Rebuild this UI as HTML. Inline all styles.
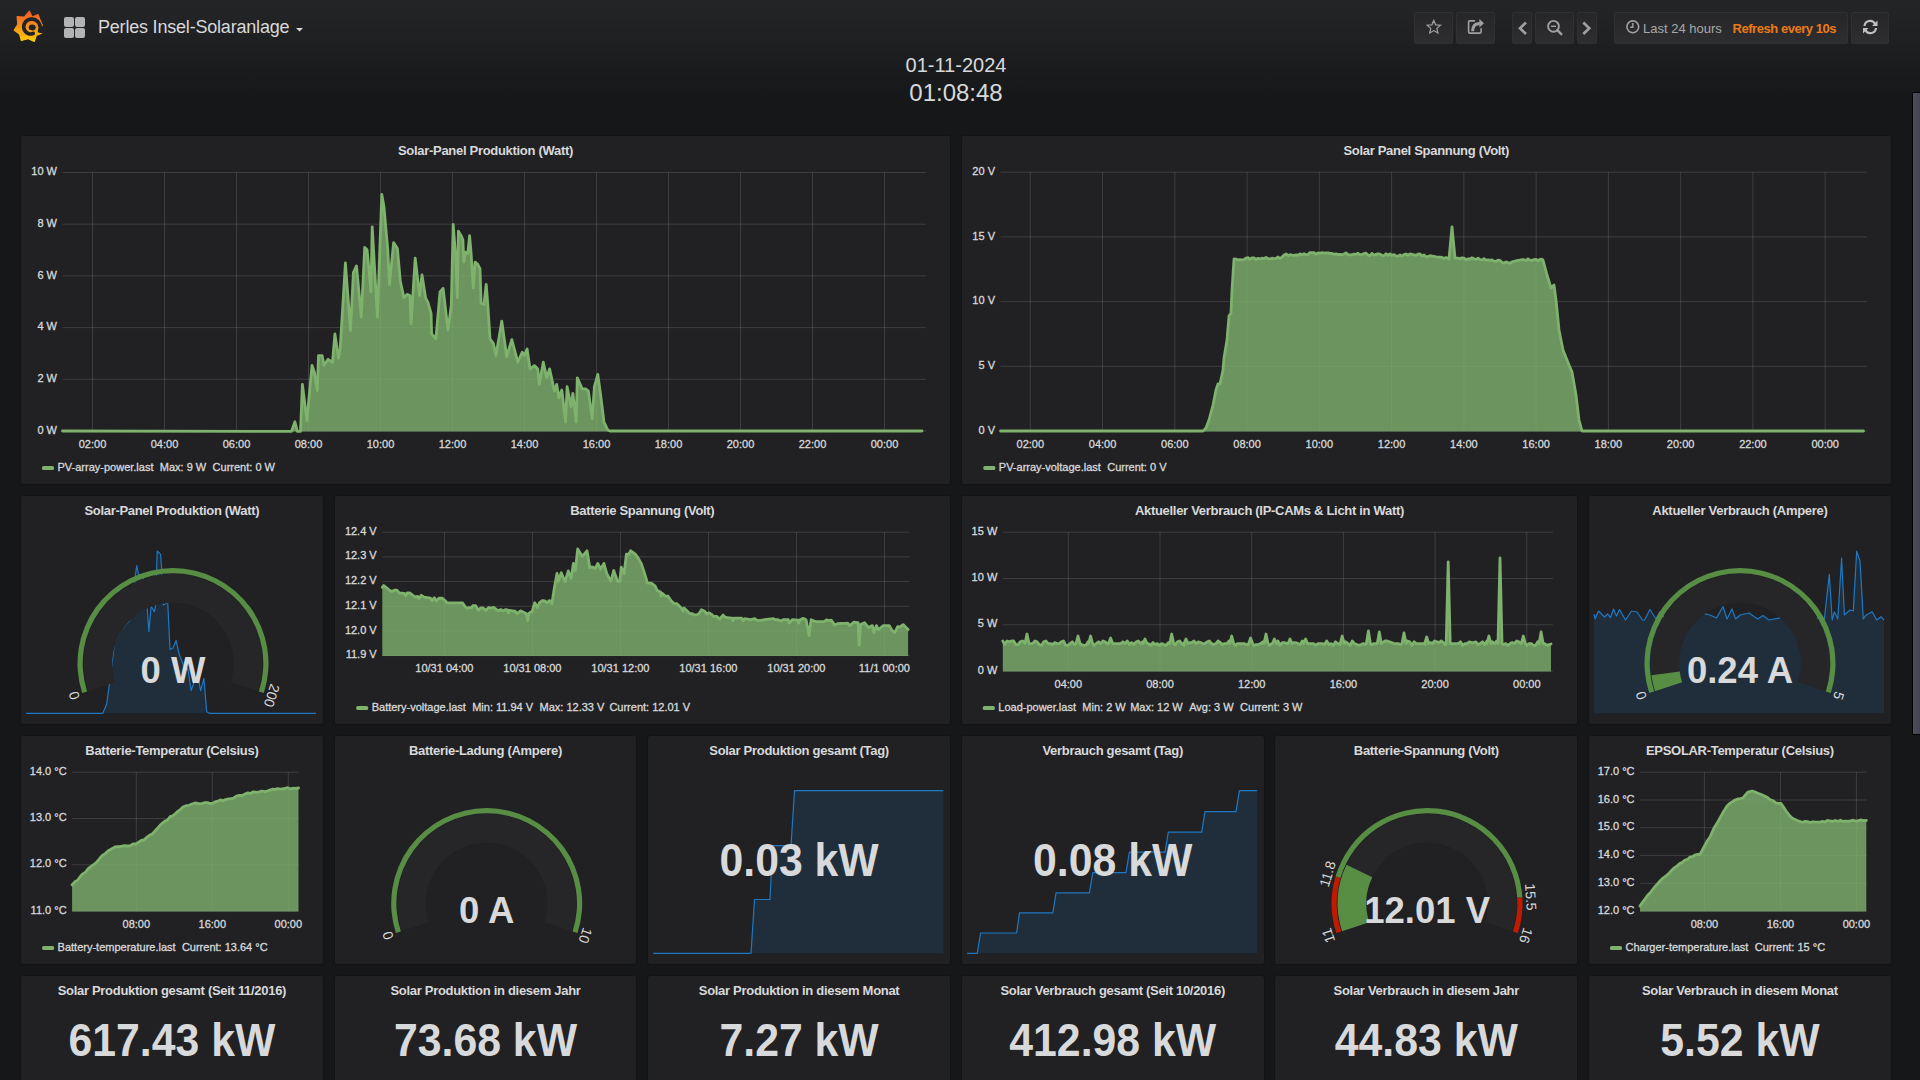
<!DOCTYPE html>
<html><head><meta charset="utf-8"><style>
html,body{margin:0;padding:0;width:1920px;height:1080px;overflow:hidden;}
body{background:linear-gradient(180deg,#222426 10px,#161719 100px);font-family:"Liberation Sans", sans-serif;color:#d8d9da;position:relative;}
.p{position:absolute;background:#212124;border:1px solid #131315;box-sizing:border-box;border-radius:3px;}
.nb{position:absolute;top:12px;height:32px;box-sizing:border-box;border:1px solid #303033;border-radius:2px;background:linear-gradient(180deg,#262628,#2e2e31);}
svg{position:absolute;left:0;top:0;}
svg text{font-family:"Liberation Sans", sans-serif;}
</style></head><body>
<div class="nb" style="left:1414px;width:39px"></div><div class="nb" style="left:1456px;width:39px"></div><div class="nb" style="left:1512px;width:20px"></div><div class="nb" style="left:1535px;width:39px"></div><div class="nb" style="left:1577px;width:20px"></div><div class="nb" style="left:1614px;width:234px"></div><div class="nb" style="left:1851px;width:38px"></div><div style="position:absolute;left:1912px;top:92px;width:8px;height:643px;background:linear-gradient(90deg,#4d4d5d,#44444f);border:1px solid #000;border-right:none;box-sizing:border-box"></div><div class="p" style="left:20px;top:135px;width:931px;height:350.2px"></div><div class="p" style="left:960.8px;top:135px;width:931px;height:350.2px"></div><div class="p" style="left:20px;top:495px;width:303.8px;height:230.1px"></div><div class="p" style="left:333.6px;top:495px;width:617.4px;height:230.1px"></div><div class="p" style="left:960.8px;top:495px;width:617.4px;height:230.1px"></div><div class="p" style="left:1588px;top:495px;width:303.8px;height:230.1px"></div><div class="p" style="left:20px;top:735px;width:303.8px;height:230.1px"></div><div class="p" style="left:20px;top:975px;width:303.8px;height:230.1px"></div><div class="p" style="left:333.6px;top:735px;width:303.8px;height:230.1px"></div><div class="p" style="left:333.6px;top:975px;width:303.8px;height:230.1px"></div><div class="p" style="left:647.2px;top:735px;width:303.8px;height:230.1px"></div><div class="p" style="left:647.2px;top:975px;width:303.8px;height:230.1px"></div><div class="p" style="left:960.8px;top:735px;width:303.8px;height:230.1px"></div><div class="p" style="left:960.8px;top:975px;width:303.8px;height:230.1px"></div><div class="p" style="left:1274.4px;top:735px;width:303.8px;height:230.1px"></div><div class="p" style="left:1274.4px;top:975px;width:303.8px;height:230.1px"></div><div class="p" style="left:1588px;top:735px;width:303.8px;height:230.1px"></div><div class="p" style="left:1588px;top:975px;width:303.8px;height:230.1px"></div>
<svg width="1920" height="1080" viewBox="0 0 1920 1080">
<defs><linearGradient id="lg" x1="0" y1="0" x2="0" y2="1"><stop offset="0" stop-color="#f05a28"/><stop offset="1" stop-color="#fbca0a"/></linearGradient></defs>
<path d="M29.35,11.3 L32.22,17.15 L38,14.7 L40.1,20.4 L42.2,25.2 L39.42,28.81 L41.8,33.2 L36.23,35.33 L34.2,41.3 L27.85,38.48 L21.4,40.2 L19.55,33.9 L14.3,30.1 L17.97,24.32 L17.2,16.6 L24.47,17.27 Z" fill="url(#lg)" stroke="url(#lg)" stroke-width="1.4" stroke-linejoin="round"/>
<path d="M44.5,32 L39.6,31.04 L39.97,29.85 L40.17,28.62 L40.2,27.39 L40.06,26.18 L39.76,25.01 L39.31,23.89 L38.71,22.86 L37.99,21.92 L37.15,21.1 L36.21,20.4 L35.2,19.85 L34.12,19.44 L33.02,19.18 L31.89,19.07 L30.77,19.12 L29.68,19.32 L28.63,19.67 L27.65,20.15 L26.75,20.75 L25.95,21.47 L25.26,22.28 L24.69,23.17 L24.25,24.12 L23.94,25.11 L23.78,26.12 L23.76,27.14 L23.87,28.15 L24.12,29.12 L24.49,30.04 L24.99,30.89 L25.58,31.66 L26.27,32.33 L27.04,32.9 L27.87,33.35 L28.75,33.68 L29.65,33.89 L30.57,33.97 L31.48,33.93 L32.36,33.76 L33.21,33.48" fill="none" stroke="#212225" stroke-width="3.7" stroke-linecap="round" stroke-linejoin="round"/>
<ellipse cx="32.2" cy="27.5" rx="3.5" ry="3.0" fill="#212225"/>
<circle cx="30.8" cy="31.2" r="1.1" fill="#f3a11b"/>
<rect x="64" y="17" width="10" height="10" rx="2" fill="#b2b3b4"/>
<rect x="75" y="17" width="10" height="10" rx="2" fill="#b2b3b4"/>
<rect x="64" y="28" width="10" height="10" rx="2" fill="#b2b3b4"/>
<rect x="75" y="28" width="10" height="10" rx="2" fill="#b2b3b4"/>
<text x="98" y="33" font-size="18" font-weight="400" text-anchor="start" fill="#d8d9da" letter-spacing="-0.2">Perles Insel-Solaranlage</text>
<path d="M296,28 L303,28 L299.5,31.5 Z" fill="#d8d9da"/>
<path d="M1433.8,20.4 L1435.68,24.81 L1440.46,25.24 L1436.84,28.39 L1437.91,33.06 L1433.8,30.6 L1429.69,33.06 L1430.76,28.39 L1427.14,25.24 L1431.92,24.81 Z" fill="none" stroke="#a0a0a0" stroke-width="1.2" stroke-linejoin="miter"/>
<path d="M1475,20.9 L1469.6,20.9 Q1468.6,20.9 1468.6,21.9 L1468.6,32.1 Q1468.6,33.1 1469.6,33.1 L1480.1,33.1 Q1481.1,33.1 1481.1,32.1 L1481.1,28.3" fill="none" stroke="#a0a0a0" stroke-width="1.6"/>
<path d="M1472.6,31.2 C1472.6,25.6 1475.2,23.4 1479.8,23.4" fill="none" stroke="#a0a0a0" stroke-width="3"/>
<path d="M1479.4,19 L1484,23.3 L1479.4,27.6 Z" fill="#a0a0a0"/>
<path d="M1526,22.5 L1520,28.3 L1526,34" fill="none" stroke="#a0a0a0" stroke-width="2.6"/>
<path d="M1583.3,22.5 L1589.3,28.3 L1583.3,34" fill="none" stroke="#a0a0a0" stroke-width="2.6"/>
<circle cx="1553.5" cy="26.3" r="5.4" fill="none" stroke="#a0a0a0" stroke-width="1.9"/>
<path d="M1557.3,30.2 L1561.3,34.2" stroke="#a0a0a0" stroke-width="2.4" stroke-linecap="round"/>
<path d="M1551,26.3 L1556,26.3" stroke="#a0a0a0" stroke-width="1.5"/>
<circle cx="1632.8" cy="26.8" r="5.9" fill="none" stroke="#a0a0a0" stroke-width="1.6"/>
<path d="M1632.8,23 L1632.8,27.2 L1630.2,27.2" fill="none" stroke="#a0a0a0" stroke-width="1.4"/>
<text x="1643" y="33.2" font-size="13" font-weight="400" text-anchor="start" fill="#a9a9a9" >Last 24 hours</text>
<text x="1732.5" y="33.2" font-size="13" font-weight="700" text-anchor="start" fill="#eb7b18" letter-spacing="-0.45">Refresh every 10s</text>
<path d="M1864.5,26 A5.6,5.6 0 0 1 1875,23.8" fill="none" stroke="#c0c0c0" stroke-width="2.2"/>
<path d="M1877.5,20.5 L1877.5,26 L1872,26 Z" fill="#c0c0c0"/>
<path d="M1876,28 A5.6,5.6 0 0 1 1865.5,30.2" fill="none" stroke="#c0c0c0" stroke-width="2.2"/>
<path d="M1863,33.5 L1863,28 L1868.5,28 Z" fill="#c0c0c0"/>
<text x="956" y="71.5" font-size="20" font-weight="400" text-anchor="middle" fill="#d8d9da" >01-11-2024</text>
<text x="956" y="100.8" font-size="24" font-weight="400" text-anchor="middle" fill="#d8d9da" >01:08:48</text>
<text x="485.5" y="154.6" font-size="13" font-weight="700" text-anchor="middle" fill="#d8d9da" letter-spacing="-0.3">Solar-Panel Produktion (Watt)</text>
<text x="1426.3" y="154.6" font-size="13" font-weight="700" text-anchor="middle" fill="#d8d9da" letter-spacing="-0.3">Solar Panel Spannung (Volt)</text>
<g stroke="rgba(255,255,255,0.13)" stroke-width="1"><line x1="62.5" y1="431" x2="926" y2="431" /><line x1="62.5" y1="379.3" x2="926" y2="379.3" /><line x1="62.5" y1="327.6" x2="926" y2="327.6" /><line x1="62.5" y1="275.9" x2="926" y2="275.9" /><line x1="62.5" y1="224.2" x2="926" y2="224.2" /><line x1="62.5" y1="172.5" x2="926" y2="172.5" /><line x1="92.5" y1="172.5" x2="92.5" y2="431" /><line x1="164.5" y1="172.5" x2="164.5" y2="431" /><line x1="236.5" y1="172.5" x2="236.5" y2="431" /><line x1="308.5" y1="172.5" x2="308.5" y2="431" /><line x1="380.5" y1="172.5" x2="380.5" y2="431" /><line x1="452.5" y1="172.5" x2="452.5" y2="431" /><line x1="524.5" y1="172.5" x2="524.5" y2="431" /><line x1="596.5" y1="172.5" x2="596.5" y2="431" /><line x1="668.5" y1="172.5" x2="668.5" y2="431" /><line x1="740.5" y1="172.5" x2="740.5" y2="431" /><line x1="812.5" y1="172.5" x2="812.5" y2="431" /><line x1="884.5" y1="172.5" x2="884.5" y2="431" /></g>
<text x="57" y="433.6" font-size="11" font-weight="400" text-anchor="end" fill="#d8d9da"  stroke="#d8d9da" stroke-width="0.3">0 W</text>
<text x="57" y="381.9" font-size="11" font-weight="400" text-anchor="end" fill="#d8d9da"  stroke="#d8d9da" stroke-width="0.3">2 W</text>
<text x="57" y="330.2" font-size="11" font-weight="400" text-anchor="end" fill="#d8d9da"  stroke="#d8d9da" stroke-width="0.3">4 W</text>
<text x="57" y="278.5" font-size="11" font-weight="400" text-anchor="end" fill="#d8d9da"  stroke="#d8d9da" stroke-width="0.3">6 W</text>
<text x="57" y="226.8" font-size="11" font-weight="400" text-anchor="end" fill="#d8d9da"  stroke="#d8d9da" stroke-width="0.3">8 W</text>
<text x="57" y="175.1" font-size="11" font-weight="400" text-anchor="end" fill="#d8d9da"  stroke="#d8d9da" stroke-width="0.3">10 W</text>
<text x="92.5" y="447.8" font-size="11" font-weight="400" text-anchor="middle" fill="#d8d9da"  stroke="#d8d9da" stroke-width="0.3">02:00</text>
<text x="164.5" y="447.8" font-size="11" font-weight="400" text-anchor="middle" fill="#d8d9da"  stroke="#d8d9da" stroke-width="0.3">04:00</text>
<text x="236.5" y="447.8" font-size="11" font-weight="400" text-anchor="middle" fill="#d8d9da"  stroke="#d8d9da" stroke-width="0.3">06:00</text>
<text x="308.5" y="447.8" font-size="11" font-weight="400" text-anchor="middle" fill="#d8d9da"  stroke="#d8d9da" stroke-width="0.3">08:00</text>
<text x="380.5" y="447.8" font-size="11" font-weight="400" text-anchor="middle" fill="#d8d9da"  stroke="#d8d9da" stroke-width="0.3">10:00</text>
<text x="452.5" y="447.8" font-size="11" font-weight="400" text-anchor="middle" fill="#d8d9da"  stroke="#d8d9da" stroke-width="0.3">12:00</text>
<text x="524.5" y="447.8" font-size="11" font-weight="400" text-anchor="middle" fill="#d8d9da"  stroke="#d8d9da" stroke-width="0.3">14:00</text>
<text x="596.5" y="447.8" font-size="11" font-weight="400" text-anchor="middle" fill="#d8d9da"  stroke="#d8d9da" stroke-width="0.3">16:00</text>
<text x="668.5" y="447.8" font-size="11" font-weight="400" text-anchor="middle" fill="#d8d9da"  stroke="#d8d9da" stroke-width="0.3">18:00</text>
<text x="740.5" y="447.8" font-size="11" font-weight="400" text-anchor="middle" fill="#d8d9da"  stroke="#d8d9da" stroke-width="0.3">20:00</text>
<text x="812.5" y="447.8" font-size="11" font-weight="400" text-anchor="middle" fill="#d8d9da"  stroke="#d8d9da" stroke-width="0.3">22:00</text>
<text x="884.5" y="447.8" font-size="11" font-weight="400" text-anchor="middle" fill="#d8d9da"  stroke="#d8d9da" stroke-width="0.3">00:00</text>
<path d="M62.5,431 L291.5,431.4 L294.9,421.8 L297.3,431.4 L300.5,431.4 L302.4,384.5 L306.9,420.6 L312,365.3 L314.4,372.5 L317.3,390.5 L318.5,355.6 L322.1,355.6 L324,365.3 L328.1,359.3 L332.5,362.4 L334.9,334 L338.5,358.1 L340.2,348.4 L345.4,263 L350.5,330.4 L353.4,272.6 L356.5,265.9 L361.3,317.2 L364.7,247.4 L367.1,249.8 L371,291.9 L372.2,226.9 L377.4,317.2 L381.8,194.4 L383.9,206.5 L387.8,249.8 L389.5,284.7 L393.6,242.6 L397.4,248.6 L400.3,281.1 L403.9,297.9 L407,294.3 L409.9,295.5 L411.1,323.9 L415.2,258.2 L419.6,295.5 L422,275 L425.6,297.9 L428,302.7 L431.1,313.5 L431.6,334 L435.9,338.8 L440,291.9 L443.1,288.3 L448,330.4 L451.3,305.1 L453.2,224.5 L455.6,255.6 L457.3,297.8 L458.4,231.1 L461.1,235.6 L462.9,240 L463.8,262.2 L465.6,252.2 L467.8,253.3 L469.6,235.6 L471.1,253.3 L473.3,287.8 L475.1,262.2 L477.8,264.4 L480,268.9 L481.1,303.3 L484,304.4 L486.2,284.4 L487.8,304.4 L490,338.9 L493.3,343.3 L496,355.6 L501.8,321.1 L506.7,356.7 L511.8,339.6 L517.8,362.2 L522.2,352.2 L524.4,355.6 L527.1,348.9 L530,368.9 L534.4,365.6 L537.8,368.9 L539.3,384.4 L543.3,362.2 L546.7,377.8 L549.6,368.9 L554.4,391.1 L556.7,384.4 L558.9,397.8 L561.8,390 L565.6,422.2 L567.1,386.7 L571.1,406.7 L572.9,393.3 L576.2,422.2 L577.3,377.8 L582.2,388.9 L585.6,388.9 L588.4,391.1 L592.2,418.9 L594.4,386.7 L597.8,374.4 L600.4,393.3 L604,422.2 L607.8,430 L610,431 L922,431 L922,431.5 L62.5,431.5 Z" fill="rgba(126,178,109,0.8)" stroke="none"/>
<path d="M62.5,431 L291.5,431.4 L294.9,421.8 L297.3,431.4 L300.5,431.4 L302.4,384.5 L306.9,420.6 L312,365.3 L314.4,372.5 L317.3,390.5 L318.5,355.6 L322.1,355.6 L324,365.3 L328.1,359.3 L332.5,362.4 L334.9,334 L338.5,358.1 L340.2,348.4 L345.4,263 L350.5,330.4 L353.4,272.6 L356.5,265.9 L361.3,317.2 L364.7,247.4 L367.1,249.8 L371,291.9 L372.2,226.9 L377.4,317.2 L381.8,194.4 L383.9,206.5 L387.8,249.8 L389.5,284.7 L393.6,242.6 L397.4,248.6 L400.3,281.1 L403.9,297.9 L407,294.3 L409.9,295.5 L411.1,323.9 L415.2,258.2 L419.6,295.5 L422,275 L425.6,297.9 L428,302.7 L431.1,313.5 L431.6,334 L435.9,338.8 L440,291.9 L443.1,288.3 L448,330.4 L451.3,305.1 L453.2,224.5 L455.6,255.6 L457.3,297.8 L458.4,231.1 L461.1,235.6 L462.9,240 L463.8,262.2 L465.6,252.2 L467.8,253.3 L469.6,235.6 L471.1,253.3 L473.3,287.8 L475.1,262.2 L477.8,264.4 L480,268.9 L481.1,303.3 L484,304.4 L486.2,284.4 L487.8,304.4 L490,338.9 L493.3,343.3 L496,355.6 L501.8,321.1 L506.7,356.7 L511.8,339.6 L517.8,362.2 L522.2,352.2 L524.4,355.6 L527.1,348.9 L530,368.9 L534.4,365.6 L537.8,368.9 L539.3,384.4 L543.3,362.2 L546.7,377.8 L549.6,368.9 L554.4,391.1 L556.7,384.4 L558.9,397.8 L561.8,390 L565.6,422.2 L567.1,386.7 L571.1,406.7 L572.9,393.3 L576.2,422.2 L577.3,377.8 L582.2,388.9 L585.6,388.9 L588.4,391.1 L592.2,418.9 L594.4,386.7 L597.8,374.4 L600.4,393.3 L604,422.2 L607.8,430 L610,431 L922,431" fill="none" stroke="#7eb26d" stroke-width="2.8" stroke-linejoin="round" stroke-linecap="round"/>
<rect x="42" y="465.9" width="12" height="4.2" rx="1.5" fill="#7eb26d"/>
<text x="57.5" y="471" font-size="11" font-weight="400" text-anchor="start" fill="#d8d9da"  stroke="#d8d9da" stroke-width="0.3">PV-array-power.last</text>
<text x="159.8" y="471" font-size="11" font-weight="400" text-anchor="start" fill="#d8d9da"  stroke="#d8d9da" stroke-width="0.3">Max: 9 W</text>
<text x="212.6" y="471" font-size="11" font-weight="400" text-anchor="start" fill="#d8d9da"  stroke="#d8d9da" stroke-width="0.3">Current: 0 W</text>
<g stroke="rgba(255,255,255,0.13)" stroke-width="1"><line x1="1000.5" y1="431" x2="1867" y2="431" /><line x1="1000.5" y1="366.3" x2="1867" y2="366.3" /><line x1="1000.5" y1="301.6" x2="1867" y2="301.6" /><line x1="1000.5" y1="236.9" x2="1867" y2="236.9" /><line x1="1000.5" y1="172.2" x2="1867" y2="172.2" /><line x1="1030.3" y1="172.3" x2="1030.3" y2="431" /><line x1="1102.56" y1="172.3" x2="1102.56" y2="431" /><line x1="1174.82" y1="172.3" x2="1174.82" y2="431" /><line x1="1247.08" y1="172.3" x2="1247.08" y2="431" /><line x1="1319.34" y1="172.3" x2="1319.34" y2="431" /><line x1="1391.6" y1="172.3" x2="1391.6" y2="431" /><line x1="1463.86" y1="172.3" x2="1463.86" y2="431" /><line x1="1536.12" y1="172.3" x2="1536.12" y2="431" /><line x1="1608.38" y1="172.3" x2="1608.38" y2="431" /><line x1="1680.64" y1="172.3" x2="1680.64" y2="431" /><line x1="1752.9" y1="172.3" x2="1752.9" y2="431" /><line x1="1825.16" y1="172.3" x2="1825.16" y2="431" /></g>
<text x="995" y="433.6" font-size="11" font-weight="400" text-anchor="end" fill="#d8d9da"  stroke="#d8d9da" stroke-width="0.3">0 V</text>
<text x="995" y="368.9" font-size="11" font-weight="400" text-anchor="end" fill="#d8d9da"  stroke="#d8d9da" stroke-width="0.3">5 V</text>
<text x="995" y="304.2" font-size="11" font-weight="400" text-anchor="end" fill="#d8d9da"  stroke="#d8d9da" stroke-width="0.3">10 V</text>
<text x="995" y="239.5" font-size="11" font-weight="400" text-anchor="end" fill="#d8d9da"  stroke="#d8d9da" stroke-width="0.3">15 V</text>
<text x="995" y="174.8" font-size="11" font-weight="400" text-anchor="end" fill="#d8d9da"  stroke="#d8d9da" stroke-width="0.3">20 V</text>
<text x="1030.3" y="447.8" font-size="11" font-weight="400" text-anchor="middle" fill="#d8d9da"  stroke="#d8d9da" stroke-width="0.3">02:00</text>
<text x="1102.56" y="447.8" font-size="11" font-weight="400" text-anchor="middle" fill="#d8d9da"  stroke="#d8d9da" stroke-width="0.3">04:00</text>
<text x="1174.82" y="447.8" font-size="11" font-weight="400" text-anchor="middle" fill="#d8d9da"  stroke="#d8d9da" stroke-width="0.3">06:00</text>
<text x="1247.08" y="447.8" font-size="11" font-weight="400" text-anchor="middle" fill="#d8d9da"  stroke="#d8d9da" stroke-width="0.3">08:00</text>
<text x="1319.34" y="447.8" font-size="11" font-weight="400" text-anchor="middle" fill="#d8d9da"  stroke="#d8d9da" stroke-width="0.3">10:00</text>
<text x="1391.6" y="447.8" font-size="11" font-weight="400" text-anchor="middle" fill="#d8d9da"  stroke="#d8d9da" stroke-width="0.3">12:00</text>
<text x="1463.86" y="447.8" font-size="11" font-weight="400" text-anchor="middle" fill="#d8d9da"  stroke="#d8d9da" stroke-width="0.3">14:00</text>
<text x="1536.12" y="447.8" font-size="11" font-weight="400" text-anchor="middle" fill="#d8d9da"  stroke="#d8d9da" stroke-width="0.3">16:00</text>
<text x="1608.38" y="447.8" font-size="11" font-weight="400" text-anchor="middle" fill="#d8d9da"  stroke="#d8d9da" stroke-width="0.3">18:00</text>
<text x="1680.64" y="447.8" font-size="11" font-weight="400" text-anchor="middle" fill="#d8d9da"  stroke="#d8d9da" stroke-width="0.3">20:00</text>
<text x="1752.9" y="447.8" font-size="11" font-weight="400" text-anchor="middle" fill="#d8d9da"  stroke="#d8d9da" stroke-width="0.3">22:00</text>
<text x="1825.16" y="447.8" font-size="11" font-weight="400" text-anchor="middle" fill="#d8d9da"  stroke="#d8d9da" stroke-width="0.3">00:00</text>
<path d="M1000.5,431 L1203,431 L1206,428 L1209,420 L1213,405 L1216,390 L1218,384 L1220,384 L1223,370 L1224,358 L1227,340 L1229,316 L1231,313 L1232,290 L1234,259 L1236,259.04 L1238,259.94 L1240,259.69 L1242,259.95 L1244,259.7 L1246,258.06 L1248,257.63 L1250,259.31 L1252,257.89 L1254,257.8 L1256,259.59 L1258,258.3 L1260,259.14 L1262,258.24 L1264,258.6 L1266,257.39 L1268,258.52 L1270,259.05 L1272,258.19 L1274,258.68 L1276,258.48 L1278,256.99 L1280,258.62 L1282,257.02 L1284,255.12 L1286,253.82 L1288,255.71 L1290,254.65 L1292,255.13 L1294,255.39 L1296,254.89 L1298,255.27 L1300,253.89 L1302,254.75 L1304,253.78 L1306,254.85 L1308,254.59 L1310,252.61 L1312,252.58 L1314,252.66 L1316,254.35 L1318,252.96 L1320,253.3 L1322,252.57 L1324,253.12 L1326,252.88 L1328,252.84 L1330,253.45 L1332,253.5 L1334,254.32 L1336,253.84 L1338,254.48 L1340,254.36 L1342,254.73 L1344,254.01 L1346,252.84 L1348,254.57 L1350,254.87 L1352,254.77 L1354,254.02 L1356,254.41 L1358,253.26 L1360,254.8 L1362,254.24 L1364,253.62 L1366,253.15 L1368,255.12 L1370,255.51 L1372,253.41 L1374,255.19 L1376,254.32 L1378,253.76 L1380,254.17 L1382,255.38 L1384,255.69 L1386,253.77 L1388,255.21 L1390,253.91 L1392,255.52 L1394,254.59 L1396,255.91 L1398,256.15 L1400,255.01 L1402,256.2 L1404,254.54 L1406,253.98 L1408,255.24 L1410,253.88 L1412,254.27 L1414,254.78 L1416,255.27 L1418,254.17 L1420,253.9 L1422,256.08 L1424,254.95 L1426,256.7 L1428,256.75 L1430,255.71 L1432,256.1 L1434,256.45 L1436,256.95 L1438,257.03 L1440,257.14 L1442,257.49 L1444,258.46 L1446,257.57 L1449,259 L1452,227 L1455,258 L1458,258.06 L1460,258.86 L1462,257.81 L1464,258.08 L1466,259.81 L1468,258.83 L1470,259.01 L1472,257.83 L1474,258.91 L1476,259.41 L1478,258.18 L1480,259.72 L1482,259.87 L1484,258.61 L1486,260.08 L1488,259.81 L1490,260.43 L1492,259.95 L1494,261.1 L1496,261.47 L1498,260.05 L1500,260.45 L1502,262.22 L1504,263.21 L1506,261.8 L1508,262.6 L1510,263.22 L1512,261.97 L1514,261.47 L1516,260.75 L1518,260.29 L1520,260.23 L1522,259.52 L1524,259.71 L1526,260.65 L1528,258.86 L1530,260.17 L1532,260.56 L1534,259.54 L1536,259.33 L1538,260.73 L1540,259.37 L1542,259.25 L1543,260 L1547,275 L1551,288 L1554,285 L1556,300 L1559,330 L1563,350 L1569,365 L1572,372 L1576,395 L1579,420 L1582,431 L1863.5,431 L1863.5,431.5 L1000.5,431.5 Z" fill="rgba(126,178,109,0.8)" stroke="none"/>
<path d="M1000.5,431 L1203,431 L1206,428 L1209,420 L1213,405 L1216,390 L1218,384 L1220,384 L1223,370 L1224,358 L1227,340 L1229,316 L1231,313 L1232,290 L1234,259 L1236,259.04 L1238,259.94 L1240,259.69 L1242,259.95 L1244,259.7 L1246,258.06 L1248,257.63 L1250,259.31 L1252,257.89 L1254,257.8 L1256,259.59 L1258,258.3 L1260,259.14 L1262,258.24 L1264,258.6 L1266,257.39 L1268,258.52 L1270,259.05 L1272,258.19 L1274,258.68 L1276,258.48 L1278,256.99 L1280,258.62 L1282,257.02 L1284,255.12 L1286,253.82 L1288,255.71 L1290,254.65 L1292,255.13 L1294,255.39 L1296,254.89 L1298,255.27 L1300,253.89 L1302,254.75 L1304,253.78 L1306,254.85 L1308,254.59 L1310,252.61 L1312,252.58 L1314,252.66 L1316,254.35 L1318,252.96 L1320,253.3 L1322,252.57 L1324,253.12 L1326,252.88 L1328,252.84 L1330,253.45 L1332,253.5 L1334,254.32 L1336,253.84 L1338,254.48 L1340,254.36 L1342,254.73 L1344,254.01 L1346,252.84 L1348,254.57 L1350,254.87 L1352,254.77 L1354,254.02 L1356,254.41 L1358,253.26 L1360,254.8 L1362,254.24 L1364,253.62 L1366,253.15 L1368,255.12 L1370,255.51 L1372,253.41 L1374,255.19 L1376,254.32 L1378,253.76 L1380,254.17 L1382,255.38 L1384,255.69 L1386,253.77 L1388,255.21 L1390,253.91 L1392,255.52 L1394,254.59 L1396,255.91 L1398,256.15 L1400,255.01 L1402,256.2 L1404,254.54 L1406,253.98 L1408,255.24 L1410,253.88 L1412,254.27 L1414,254.78 L1416,255.27 L1418,254.17 L1420,253.9 L1422,256.08 L1424,254.95 L1426,256.7 L1428,256.75 L1430,255.71 L1432,256.1 L1434,256.45 L1436,256.95 L1438,257.03 L1440,257.14 L1442,257.49 L1444,258.46 L1446,257.57 L1449,259 L1452,227 L1455,258 L1458,258.06 L1460,258.86 L1462,257.81 L1464,258.08 L1466,259.81 L1468,258.83 L1470,259.01 L1472,257.83 L1474,258.91 L1476,259.41 L1478,258.18 L1480,259.72 L1482,259.87 L1484,258.61 L1486,260.08 L1488,259.81 L1490,260.43 L1492,259.95 L1494,261.1 L1496,261.47 L1498,260.05 L1500,260.45 L1502,262.22 L1504,263.21 L1506,261.8 L1508,262.6 L1510,263.22 L1512,261.97 L1514,261.47 L1516,260.75 L1518,260.29 L1520,260.23 L1522,259.52 L1524,259.71 L1526,260.65 L1528,258.86 L1530,260.17 L1532,260.56 L1534,259.54 L1536,259.33 L1538,260.73 L1540,259.37 L1542,259.25 L1543,260 L1547,275 L1551,288 L1554,285 L1556,300 L1559,330 L1563,350 L1569,365 L1572,372 L1576,395 L1579,420 L1582,431 L1863.5,431" fill="none" stroke="#7eb26d" stroke-width="2.8" stroke-linejoin="round" stroke-linecap="round"/>
<rect x="983.3" y="465.9" width="12" height="4.2" rx="1.5" fill="#7eb26d"/>
<text x="998.8" y="471" font-size="11" font-weight="400" text-anchor="start" fill="#d8d9da"  stroke="#d8d9da" stroke-width="0.3">PV-array-voltage.last</text>
<text x="1107.2" y="471" font-size="11" font-weight="400" text-anchor="start" fill="#d8d9da"  stroke="#d8d9da" stroke-width="0.3">Current: 0 V</text>
<text x="171.9" y="514.6" font-size="13" font-weight="700" text-anchor="middle" fill="#d8d9da" letter-spacing="-0.3">Solar-Panel Produktion (Watt)</text>
<path d="M26,713.3 L102.8,713.3 L106.7,704 L109.4,684 L111.7,666 L114.4,644 L118,636 L122,629 L130,620 L134,600 L135,578 L136.8,565.6 L139.4,579 L142.8,574.4 L145,590 L147.2,608 L148.9,631.7 L151.1,606 L154.4,611.7 L155.6,605.6 L157.2,551 L160.6,554.4 L162,573 L163.3,605 L166.7,603.3 L167.8,604 L170,649.4 L172.8,648.3 L176.1,640.6 L179.4,655 L185.6,670.6 L187.8,668.3 L191.1,690.6 L193.9,682.8 L197.8,675 L200.6,690.6 L203.9,678.3 L206.7,711.7 L209.4,713.3 L316,713.3 L316,713.3 L26,713.3 Z" fill="rgba(31,118,189,0.16)"/>
<path d="M26,713.3 L102.8,713.3 L106.7,704 L109.4,684 L111.7,666 L114.4,644 L118,636 L122,629 L130,620 L134,600 L135,578 L136.8,565.6 L139.4,579 L142.8,574.4 L145,590 L147.2,608 L148.9,631.7 L151.1,606 L154.4,611.7 L155.6,605.6 L157.2,551 L160.6,554.4 L162,573 L163.3,605 L166.7,603.3 L167.8,604 L170,649.4 L172.8,648.3 L176.1,640.6 L179.4,655 L185.6,670.6 L187.8,668.3 L191.1,690.6 L193.9,682.8 L197.8,675 L200.6,690.6 L203.9,678.3 L206.7,711.7 L209.4,713.3 L316,713.3" fill="none" stroke="rgb(31,120,193)" stroke-width="1.2" stroke-linejoin="round"/>
<path d="M87.98,691.13 A89.4,89.4 0 1 1 258.02,691.13 L230.82,682.29 A60.8,60.8 0 1 0 115.18,682.29 Z" fill="#262628"/>
<path d="M82.17,693.01 A95.5,95.5 0 1 1 263.83,693.01 L258.88,691.4 A90.3,90.3 0 1 0 87.12,691.4 Z" fill="#578e43"/>
<text x="0" y="0" font-size="14" text-anchor="middle" dominant-baseline="central" fill="#d8d9da" transform="translate(74.09,695.64) rotate(252)">0</text>
<text x="0" y="0" font-size="14" text-anchor="middle" dominant-baseline="central" fill="#d8d9da" transform="translate(271.91,695.64) rotate(468)">200</text>
<text x="0" y="0" font-size="36.5" font-weight="700" text-anchor="middle" fill="#d8d9da" transform="translate(173,682.5) scale(1.0,1)">0 W</text>
<text x="642.3" y="514.6" font-size="13" font-weight="700" text-anchor="middle" fill="#d8d9da" letter-spacing="-0.3">Batterie Spannung (Volt)</text>
<g stroke="rgba(255,255,255,0.13)" stroke-width="1"><line x1="382.2" y1="655.6" x2="909.6" y2="655.6" /><line x1="382.2" y1="630.92" x2="909.6" y2="630.92" /><line x1="382.2" y1="606.24" x2="909.6" y2="606.24" /><line x1="382.2" y1="581.56" x2="909.6" y2="581.56" /><line x1="382.2" y1="556.88" x2="909.6" y2="556.88" /><line x1="382.2" y1="532.2" x2="909.6" y2="532.2" /><line x1="444.4" y1="532.2" x2="444.4" y2="655.6" /><line x1="532.4" y1="532.2" x2="532.4" y2="655.6" /><line x1="620.4" y1="532.2" x2="620.4" y2="655.6" /><line x1="708.4" y1="532.2" x2="708.4" y2="655.6" /><line x1="796.4" y1="532.2" x2="796.4" y2="655.6" /><line x1="884.4" y1="532.2" x2="884.4" y2="655.6" /></g>
<text x="376.7" y="658.2" font-size="11" font-weight="400" text-anchor="end" fill="#d8d9da"  stroke="#d8d9da" stroke-width="0.3">11.9 V</text>
<text x="376.7" y="633.52" font-size="11" font-weight="400" text-anchor="end" fill="#d8d9da"  stroke="#d8d9da" stroke-width="0.3">12.0 V</text>
<text x="376.7" y="608.84" font-size="11" font-weight="400" text-anchor="end" fill="#d8d9da"  stroke="#d8d9da" stroke-width="0.3">12.1 V</text>
<text x="376.7" y="584.16" font-size="11" font-weight="400" text-anchor="end" fill="#d8d9da"  stroke="#d8d9da" stroke-width="0.3">12.2 V</text>
<text x="376.7" y="559.48" font-size="11" font-weight="400" text-anchor="end" fill="#d8d9da"  stroke="#d8d9da" stroke-width="0.3">12.3 V</text>
<text x="376.7" y="534.8" font-size="11" font-weight="400" text-anchor="end" fill="#d8d9da"  stroke="#d8d9da" stroke-width="0.3">12.4 V</text>
<text x="444.4" y="672.4" font-size="11" font-weight="400" text-anchor="middle" fill="#d8d9da"  stroke="#d8d9da" stroke-width="0.3">10/31 04:00</text>
<text x="532.4" y="672.4" font-size="11" font-weight="400" text-anchor="middle" fill="#d8d9da"  stroke="#d8d9da" stroke-width="0.3">10/31 08:00</text>
<text x="620.4" y="672.4" font-size="11" font-weight="400" text-anchor="middle" fill="#d8d9da"  stroke="#d8d9da" stroke-width="0.3">10/31 12:00</text>
<text x="708.4" y="672.4" font-size="11" font-weight="400" text-anchor="middle" fill="#d8d9da"  stroke="#d8d9da" stroke-width="0.3">10/31 16:00</text>
<text x="796.4" y="672.4" font-size="11" font-weight="400" text-anchor="middle" fill="#d8d9da"  stroke="#d8d9da" stroke-width="0.3">10/31 20:00</text>
<text x="884.4" y="672.4" font-size="11" font-weight="400" text-anchor="middle" fill="#d8d9da"  stroke="#d8d9da" stroke-width="0.3">11/1 00:00</text>
<path d="M382.3,587.3 L383.75,585.5 L386.6,587.8 L389.4,590.2 L391.9,591.5 L394.4,590.2 L396.9,590.2 L399.2,593 L401.8,593.2 L404.4,593.4 L405.8,595.8 L407.2,593 L410,593 L412.8,595.3 L415.15,597.1 L417.5,596.3 L418.9,598.6 L421.25,595.3 L424.1,597.2 L427.35,597.65 L430.6,598.1 L432,600.5 L434.4,597.7 L436.25,601 L439.1,598.1 L442.35,598.25 L445.6,601 L447,602.8 L449.54,602.8 L452.08,602.8 L454.62,602.8 L457.16,602.8 L459.7,602.8 L462.5,602.8 L464.4,605.6 L466.25,608 L469.07,607.75 L471.9,607.5 L472.8,605.6 L475.6,605.6 L478.4,610.3 L480.75,607.85 L483.1,608 L485.9,610.3 L488.75,607.5 L491.25,608.13 L493.75,607.47 L496.25,609.4 L498.5,610.78 L500.75,609.56 L503,610.94 L505.25,609.72 L507.5,609.8 L508.4,613.1 L509.4,610.3 L512.2,610.77 L515,611.25 L516.9,613.6 L520.6,610.8 L523.42,612.2 L526.25,613.6 L527.7,620.6 L529.1,613.1 L532.3,611.25 L534.7,602.8 L537.5,607.5 L539.4,602.8 L542.2,600.6 L545,601 L546.9,602.8 L549.5,600.5 L551.9,603.75 L554.2,588.75 L557,573.3 L558.4,581.25 L561.25,572.8 L565,581.7 L568.3,570.9 L571.1,578.4 L573.4,563.4 L575.3,570.9 L577.7,548.9 L580,552.65 L582.3,556.4 L584.65,553.6 L587,550.8 L589.8,567.7 L592.4,566.85 L595,568.6 L597.8,563.4 L600.6,569.1 L603.9,563.4 L606.7,573.3 L610.9,581.25 L613.75,570.5 L617.5,581.25 L619.8,581.25 L621.25,567.2 L624.1,573.75 L626.4,554.1 L628.3,555 L630.6,550.8 L632.95,552.45 L635.3,554.1 L637.7,557.3 L641.4,563.9 L643.75,570.9 L647.5,583.1 L651.25,583.1 L655,585.9 L657.3,590.6 L660.6,592 L661.1,596.25 L662.5,593.4 L664.8,595.8 L668.1,596.25 L670.9,600.5 L673.75,603.3 L677,603.75 L681.25,608 L683.1,611.25 L684.1,608 L686.9,610.8 L689.7,613.6 L692.05,613.6 L694.4,614.9 L696.75,614.9 L699.1,613.6 L701.4,609.8 L704.7,611.25 L706.6,614.1 L708.92,612.8 L711.25,614.1 L713.6,616.4 L716.9,616.4 L719.7,619.2 L723,615 L725,617.2 L727.3,617.53 L729.6,617.87 L731.9,618.2 L732.9,620.7 L733.9,618.2 L736.53,618.2 L739.17,618.2 L741.8,618.2 L743.3,620.7 L744.8,618.7 L747.75,619.2 L750.7,619.7 L754.7,618.7 L757.7,620.7 L760,620.37 L762.3,620.03 L764.6,619.7 L766.83,619.45 L769.05,619.2 L771.27,618.95 L773.5,618.7 L775.5,619.7 L778.06,619.7 L780.62,621 L783.18,619.7 L785.74,619.7 L788.3,619.7 L789.3,623.2 L792.3,619.7 L795.25,619.95 L798.2,620.2 L798.7,623.2 L800.2,619.7 L803.15,618.4 L806.1,619.7 L809.1,635.5 L811.1,619.7 L813.55,620.7 L816,621.7 L818.67,621.7 L821.33,621.7 L824,621.7 L826.47,619.9 L828.93,620.7 L831.4,620.2 L834.8,625.1 L837.8,623.6 L840.27,623.5 L842.75,623.4 L845.23,623.3 L847.7,623.2 L849.7,625.6 L853.7,622.2 L858.1,622.7 L859.1,645.4 L860.6,624.6 L864.5,622.7 L868.5,627.6 L872.4,625.6 L873.9,632.6 L876.4,625.6 L878.4,629.6 L880.85,627.6 L883.3,625.6 L886.3,625.6 L889.3,625.6 L892,630.4 L894.7,632.6 L897.7,626.6 L900.4,626.9 L903.1,624.6 L905.6,627.1 L908.1,629.6 L908.1,656.1 L382.3,656.1 Z" fill="rgba(126,178,109,0.8)" stroke="none"/>
<path d="M382.3,587.3 L383.75,585.5 L386.6,587.8 L389.4,590.2 L391.9,591.5 L394.4,590.2 L396.9,590.2 L399.2,593 L401.8,593.2 L404.4,593.4 L405.8,595.8 L407.2,593 L410,593 L412.8,595.3 L415.15,597.1 L417.5,596.3 L418.9,598.6 L421.25,595.3 L424.1,597.2 L427.35,597.65 L430.6,598.1 L432,600.5 L434.4,597.7 L436.25,601 L439.1,598.1 L442.35,598.25 L445.6,601 L447,602.8 L449.54,602.8 L452.08,602.8 L454.62,602.8 L457.16,602.8 L459.7,602.8 L462.5,602.8 L464.4,605.6 L466.25,608 L469.07,607.75 L471.9,607.5 L472.8,605.6 L475.6,605.6 L478.4,610.3 L480.75,607.85 L483.1,608 L485.9,610.3 L488.75,607.5 L491.25,608.13 L493.75,607.47 L496.25,609.4 L498.5,610.78 L500.75,609.56 L503,610.94 L505.25,609.72 L507.5,609.8 L508.4,613.1 L509.4,610.3 L512.2,610.77 L515,611.25 L516.9,613.6 L520.6,610.8 L523.42,612.2 L526.25,613.6 L527.7,620.6 L529.1,613.1 L532.3,611.25 L534.7,602.8 L537.5,607.5 L539.4,602.8 L542.2,600.6 L545,601 L546.9,602.8 L549.5,600.5 L551.9,603.75 L554.2,588.75 L557,573.3 L558.4,581.25 L561.25,572.8 L565,581.7 L568.3,570.9 L571.1,578.4 L573.4,563.4 L575.3,570.9 L577.7,548.9 L580,552.65 L582.3,556.4 L584.65,553.6 L587,550.8 L589.8,567.7 L592.4,566.85 L595,568.6 L597.8,563.4 L600.6,569.1 L603.9,563.4 L606.7,573.3 L610.9,581.25 L613.75,570.5 L617.5,581.25 L619.8,581.25 L621.25,567.2 L624.1,573.75 L626.4,554.1 L628.3,555 L630.6,550.8 L632.95,552.45 L635.3,554.1 L637.7,557.3 L641.4,563.9 L643.75,570.9 L647.5,583.1 L651.25,583.1 L655,585.9 L657.3,590.6 L660.6,592 L661.1,596.25 L662.5,593.4 L664.8,595.8 L668.1,596.25 L670.9,600.5 L673.75,603.3 L677,603.75 L681.25,608 L683.1,611.25 L684.1,608 L686.9,610.8 L689.7,613.6 L692.05,613.6 L694.4,614.9 L696.75,614.9 L699.1,613.6 L701.4,609.8 L704.7,611.25 L706.6,614.1 L708.92,612.8 L711.25,614.1 L713.6,616.4 L716.9,616.4 L719.7,619.2 L723,615 L725,617.2 L727.3,617.53 L729.6,617.87 L731.9,618.2 L732.9,620.7 L733.9,618.2 L736.53,618.2 L739.17,618.2 L741.8,618.2 L743.3,620.7 L744.8,618.7 L747.75,619.2 L750.7,619.7 L754.7,618.7 L757.7,620.7 L760,620.37 L762.3,620.03 L764.6,619.7 L766.83,619.45 L769.05,619.2 L771.27,618.95 L773.5,618.7 L775.5,619.7 L778.06,619.7 L780.62,621 L783.18,619.7 L785.74,619.7 L788.3,619.7 L789.3,623.2 L792.3,619.7 L795.25,619.95 L798.2,620.2 L798.7,623.2 L800.2,619.7 L803.15,618.4 L806.1,619.7 L809.1,635.5 L811.1,619.7 L813.55,620.7 L816,621.7 L818.67,621.7 L821.33,621.7 L824,621.7 L826.47,619.9 L828.93,620.7 L831.4,620.2 L834.8,625.1 L837.8,623.6 L840.27,623.5 L842.75,623.4 L845.23,623.3 L847.7,623.2 L849.7,625.6 L853.7,622.2 L858.1,622.7 L859.1,645.4 L860.6,624.6 L864.5,622.7 L868.5,627.6 L872.4,625.6 L873.9,632.6 L876.4,625.6 L878.4,629.6 L880.85,627.6 L883.3,625.6 L886.3,625.6 L889.3,625.6 L892,630.4 L894.7,632.6 L897.7,626.6 L900.4,626.9 L903.1,624.6 L905.6,627.1 L908.1,629.6" fill="none" stroke="#7eb26d" stroke-width="2.8" stroke-linejoin="round" stroke-linecap="round"/>
<rect x="356.2" y="705.9" width="12" height="4.2" rx="1.5" fill="#7eb26d"/>
<text x="371.7" y="711" font-size="11" font-weight="400" text-anchor="start" fill="#d8d9da"  stroke="#d8d9da" stroke-width="0.3">Battery-voltage.last</text>
<text x="472.2" y="711" font-size="11" font-weight="400" text-anchor="start" fill="#d8d9da"  stroke="#d8d9da" stroke-width="0.3">Min: 11.94 V</text>
<text x="539.5" y="711" font-size="11" font-weight="400" text-anchor="start" fill="#d8d9da"  stroke="#d8d9da" stroke-width="0.3">Max: 12.33 V</text>
<text x="609.4" y="711" font-size="11" font-weight="400" text-anchor="start" fill="#d8d9da"  stroke="#d8d9da" stroke-width="0.3">Current: 12.01 V</text>
<text x="1269.5" y="514.6" font-size="13" font-weight="700" text-anchor="middle" fill="#d8d9da" letter-spacing="-0.3">Aktueller Verbrauch (IP-CAMs &amp; Licht in Watt)</text>
<g stroke="rgba(255,255,255,0.13)" stroke-width="1"><line x1="1002.8" y1="671.1" x2="1552.9" y2="671.1" /><line x1="1002.8" y1="624.8" x2="1552.9" y2="624.8" /><line x1="1002.8" y1="578.5" x2="1552.9" y2="578.5" /><line x1="1002.8" y1="532.2" x2="1552.9" y2="532.2" /><line x1="1068.3" y1="532.2" x2="1068.3" y2="671.1" /><line x1="1160" y1="532.2" x2="1160" y2="671.1" /><line x1="1251.7" y1="532.2" x2="1251.7" y2="671.1" /><line x1="1343.4" y1="532.2" x2="1343.4" y2="671.1" /><line x1="1435.1" y1="532.2" x2="1435.1" y2="671.1" /><line x1="1526.8" y1="532.2" x2="1526.8" y2="671.1" /></g>
<text x="997.3" y="673.7" font-size="11" font-weight="400" text-anchor="end" fill="#d8d9da"  stroke="#d8d9da" stroke-width="0.3">0 W</text>
<text x="997.3" y="627.4" font-size="11" font-weight="400" text-anchor="end" fill="#d8d9da"  stroke="#d8d9da" stroke-width="0.3">5 W</text>
<text x="997.3" y="581.1" font-size="11" font-weight="400" text-anchor="end" fill="#d8d9da"  stroke="#d8d9da" stroke-width="0.3">10 W</text>
<text x="997.3" y="534.8" font-size="11" font-weight="400" text-anchor="end" fill="#d8d9da"  stroke="#d8d9da" stroke-width="0.3">15 W</text>
<text x="1068.3" y="687.9" font-size="11" font-weight="400" text-anchor="middle" fill="#d8d9da"  stroke="#d8d9da" stroke-width="0.3">04:00</text>
<text x="1160" y="687.9" font-size="11" font-weight="400" text-anchor="middle" fill="#d8d9da"  stroke="#d8d9da" stroke-width="0.3">08:00</text>
<text x="1251.7" y="687.9" font-size="11" font-weight="400" text-anchor="middle" fill="#d8d9da"  stroke="#d8d9da" stroke-width="0.3">12:00</text>
<text x="1343.4" y="687.9" font-size="11" font-weight="400" text-anchor="middle" fill="#d8d9da"  stroke="#d8d9da" stroke-width="0.3">16:00</text>
<text x="1435.1" y="687.9" font-size="11" font-weight="400" text-anchor="middle" fill="#d8d9da"  stroke="#d8d9da" stroke-width="0.3">20:00</text>
<text x="1526.8" y="687.9" font-size="11" font-weight="400" text-anchor="middle" fill="#d8d9da"  stroke="#d8d9da" stroke-width="0.3">00:00</text>
<path d="M1002.8,641 L1004.8,644.6 L1007,641 L1009.2,641.8 L1011.4,641 L1013.6,641 L1015.8,644.6 L1018,644.6 L1020.2,641.8 L1022.4,641 L1024.6,641.8 L1025,643.5 L1027,634 L1029,643.5 L1030.5,643.6 L1032.7,643.6 L1034.9,641 L1037.1,641.8 L1039.3,644.6 L1041.5,645.4 L1043.7,641.8 L1045.9,641 L1048.1,643.6 L1050.3,643.6 L1052.5,644.6 L1054.7,642.6 L1056.9,643.6 L1059.1,643.6 L1061.3,641.8 L1063.5,641 L1065.7,645.4 L1067.9,645.4 L1070.1,643.6 L1072.3,641.8 L1074.5,644.6 L1076,643.5 L1078,636 L1080,643.5 L1081.5,644.6 L1083.7,645.4 L1085.9,645.4 L1088.1,641.8 L1088.6,643.5 L1090.6,636 L1092.6,643.5 L1094.1,645.4 L1096.3,643.6 L1098.5,641.8 L1100.7,643.6 L1102.9,641 L1105.1,641.8 L1107.3,643.6 L1108.6,643.5 L1110.6,638 L1112.6,643.5 L1114.1,643.6 L1116.3,643.6 L1118.5,643.6 L1120.7,643.6 L1122.9,641.8 L1125.1,643.6 L1127.3,641 L1129.5,644.6 L1131.7,642.6 L1133.9,644.6 L1136.1,641.8 L1138.3,641 L1140.5,643.6 L1142.7,641.8 L1143,643.5 L1145,639 L1147,643.5 L1148.5,643.6 L1150.7,645.4 L1152.9,642.6 L1155.1,644.6 L1157.3,643.6 L1159.5,645.4 L1161.7,643.6 L1163.9,644.6 L1166.1,645.4 L1168.3,642.6 L1169.7,643.5 L1171.7,634 L1173.7,643.5 L1175.2,644.6 L1177.4,641.8 L1179.6,641 L1181.8,643.6 L1184,645.4 L1184,643.5 L1186,639 L1188,643.5 L1189.5,642.6 L1191.7,642.6 L1193.9,641 L1196.1,643.6 L1198.3,641.8 L1200.5,642.6 L1202.7,643.6 L1204.9,643.6 L1207.1,641.8 L1209.3,641 L1211.5,643.6 L1213.7,644.6 L1215.9,643.6 L1218.1,641 L1220.3,642.6 L1222.5,644.6 L1224.7,643.6 L1226.9,643.6 L1229.1,641 L1229.7,643.5 L1231.7,636 L1233.7,643.5 L1235.2,645.4 L1237.4,643.6 L1239.6,643.6 L1241.8,643.6 L1244,643.6 L1246.2,644.6 L1248.4,644.6 L1248.6,643.5 L1250.6,638 L1252.6,643.5 L1254.1,645.4 L1256.3,644.6 L1258.5,644.6 L1260.7,643.6 L1262.9,641.8 L1264,643.5 L1266,634 L1268,643.5 L1269.5,645.4 L1271.7,643.6 L1272.4,643.5 L1274.4,639 L1276.4,643.5 L1277.9,641 L1280.1,645.4 L1282.3,642.6 L1284.5,642.6 L1286.7,643.6 L1288,643.5 L1290,639 L1292,643.5 L1293.5,642.6 L1295.7,642.6 L1297.9,643.6 L1300.1,644.6 L1302.3,641 L1303.6,643.5 L1305.6,639 L1307.6,643.5 L1309.1,643.6 L1311.3,643.6 L1313.5,643.6 L1315.7,645.4 L1317.9,643.6 L1320.1,643.6 L1322.3,643.6 L1324.5,644.6 L1326.7,641 L1328.9,644.6 L1331.1,643.6 L1333.3,645.4 L1335.5,641.8 L1337.7,643.6 L1339.9,644.6 L1340.2,643.5 L1342.2,636 L1344.2,643.5 L1345.7,641.8 L1347.9,643.6 L1350.1,645.4 L1352.3,641 L1354.5,643.6 L1356.7,644.6 L1358.9,645.4 L1361.1,644.6 L1363.3,643.6 L1365.5,644.6 L1366.4,643.5 L1368.4,631 L1370.4,643.5 L1371.9,644.6 L1374.1,643.6 L1376.3,643.6 L1377.3,643.5 L1379.3,632 L1381.3,643.5 L1382.8,642.6 L1385,641 L1387.2,641 L1389.4,641.8 L1391.6,642.6 L1393.8,643.6 L1396,643.6 L1398.2,643.6 L1400.4,644.6 L1402,643.5 L1404,633 L1406,643.5 L1407.5,641 L1409.7,641.8 L1411.9,645.4 L1414.1,641.8 L1416.3,643.6 L1418.5,643.6 L1420.7,643.6 L1422.9,643.6 L1425.1,644.6 L1424.7,643.5 L1426.7,637 L1428.7,643.5 L1430.2,642.6 L1432.4,643.6 L1434.6,641 L1436.8,641.8 L1439,642.6 L1441.2,641 L1443.4,642.6 L1445.6,644.6 L1446.2,643.5 L1448.2,562 L1450.2,643.5 L1451.7,643.6 L1453.9,643.6 L1456.1,643.6 L1458.3,643.6 L1460.5,641.8 L1462.7,645.4 L1464.9,643.6 L1467.1,643.6 L1469.3,641.8 L1471.5,642.6 L1473.7,642.6 L1475.9,641.8 L1478.1,644.6 L1480.3,643.6 L1482.5,641.8 L1484.7,644.6 L1486.9,641 L1486.9,643.5 L1488.9,636 L1490.9,643.5 L1492.4,641.8 L1494.6,643.6 L1496.8,641 L1498,643.5 L1500,558 L1502,643.5 L1503.5,644.6 L1505.7,643.6 L1507.9,645.4 L1510.1,643.6 L1512.3,642.6 L1514.5,643.6 L1516.7,641 L1518.9,641.8 L1521.1,643.6 L1521.3,643.5 L1523.3,636 L1525.3,643.5 L1526.8,645.4 L1529,643.6 L1531.2,643.6 L1533.4,645.4 L1535.6,645.4 L1537.8,641.8 L1539.1,643.5 L1541.1,632 L1543.1,643.5 L1544.6,643.6 L1546.8,645.4 L1549,644.6 L1551,644 L1551,671.6 L1002.8,671.6 Z" fill="rgba(126,178,109,0.8)" stroke="none"/>
<path d="M1002.8,641 L1004.8,644.6 L1007,641 L1009.2,641.8 L1011.4,641 L1013.6,641 L1015.8,644.6 L1018,644.6 L1020.2,641.8 L1022.4,641 L1024.6,641.8 L1025,643.5 L1027,634 L1029,643.5 L1030.5,643.6 L1032.7,643.6 L1034.9,641 L1037.1,641.8 L1039.3,644.6 L1041.5,645.4 L1043.7,641.8 L1045.9,641 L1048.1,643.6 L1050.3,643.6 L1052.5,644.6 L1054.7,642.6 L1056.9,643.6 L1059.1,643.6 L1061.3,641.8 L1063.5,641 L1065.7,645.4 L1067.9,645.4 L1070.1,643.6 L1072.3,641.8 L1074.5,644.6 L1076,643.5 L1078,636 L1080,643.5 L1081.5,644.6 L1083.7,645.4 L1085.9,645.4 L1088.1,641.8 L1088.6,643.5 L1090.6,636 L1092.6,643.5 L1094.1,645.4 L1096.3,643.6 L1098.5,641.8 L1100.7,643.6 L1102.9,641 L1105.1,641.8 L1107.3,643.6 L1108.6,643.5 L1110.6,638 L1112.6,643.5 L1114.1,643.6 L1116.3,643.6 L1118.5,643.6 L1120.7,643.6 L1122.9,641.8 L1125.1,643.6 L1127.3,641 L1129.5,644.6 L1131.7,642.6 L1133.9,644.6 L1136.1,641.8 L1138.3,641 L1140.5,643.6 L1142.7,641.8 L1143,643.5 L1145,639 L1147,643.5 L1148.5,643.6 L1150.7,645.4 L1152.9,642.6 L1155.1,644.6 L1157.3,643.6 L1159.5,645.4 L1161.7,643.6 L1163.9,644.6 L1166.1,645.4 L1168.3,642.6 L1169.7,643.5 L1171.7,634 L1173.7,643.5 L1175.2,644.6 L1177.4,641.8 L1179.6,641 L1181.8,643.6 L1184,645.4 L1184,643.5 L1186,639 L1188,643.5 L1189.5,642.6 L1191.7,642.6 L1193.9,641 L1196.1,643.6 L1198.3,641.8 L1200.5,642.6 L1202.7,643.6 L1204.9,643.6 L1207.1,641.8 L1209.3,641 L1211.5,643.6 L1213.7,644.6 L1215.9,643.6 L1218.1,641 L1220.3,642.6 L1222.5,644.6 L1224.7,643.6 L1226.9,643.6 L1229.1,641 L1229.7,643.5 L1231.7,636 L1233.7,643.5 L1235.2,645.4 L1237.4,643.6 L1239.6,643.6 L1241.8,643.6 L1244,643.6 L1246.2,644.6 L1248.4,644.6 L1248.6,643.5 L1250.6,638 L1252.6,643.5 L1254.1,645.4 L1256.3,644.6 L1258.5,644.6 L1260.7,643.6 L1262.9,641.8 L1264,643.5 L1266,634 L1268,643.5 L1269.5,645.4 L1271.7,643.6 L1272.4,643.5 L1274.4,639 L1276.4,643.5 L1277.9,641 L1280.1,645.4 L1282.3,642.6 L1284.5,642.6 L1286.7,643.6 L1288,643.5 L1290,639 L1292,643.5 L1293.5,642.6 L1295.7,642.6 L1297.9,643.6 L1300.1,644.6 L1302.3,641 L1303.6,643.5 L1305.6,639 L1307.6,643.5 L1309.1,643.6 L1311.3,643.6 L1313.5,643.6 L1315.7,645.4 L1317.9,643.6 L1320.1,643.6 L1322.3,643.6 L1324.5,644.6 L1326.7,641 L1328.9,644.6 L1331.1,643.6 L1333.3,645.4 L1335.5,641.8 L1337.7,643.6 L1339.9,644.6 L1340.2,643.5 L1342.2,636 L1344.2,643.5 L1345.7,641.8 L1347.9,643.6 L1350.1,645.4 L1352.3,641 L1354.5,643.6 L1356.7,644.6 L1358.9,645.4 L1361.1,644.6 L1363.3,643.6 L1365.5,644.6 L1366.4,643.5 L1368.4,631 L1370.4,643.5 L1371.9,644.6 L1374.1,643.6 L1376.3,643.6 L1377.3,643.5 L1379.3,632 L1381.3,643.5 L1382.8,642.6 L1385,641 L1387.2,641 L1389.4,641.8 L1391.6,642.6 L1393.8,643.6 L1396,643.6 L1398.2,643.6 L1400.4,644.6 L1402,643.5 L1404,633 L1406,643.5 L1407.5,641 L1409.7,641.8 L1411.9,645.4 L1414.1,641.8 L1416.3,643.6 L1418.5,643.6 L1420.7,643.6 L1422.9,643.6 L1425.1,644.6 L1424.7,643.5 L1426.7,637 L1428.7,643.5 L1430.2,642.6 L1432.4,643.6 L1434.6,641 L1436.8,641.8 L1439,642.6 L1441.2,641 L1443.4,642.6 L1445.6,644.6 L1446.2,643.5 L1448.2,562 L1450.2,643.5 L1451.7,643.6 L1453.9,643.6 L1456.1,643.6 L1458.3,643.6 L1460.5,641.8 L1462.7,645.4 L1464.9,643.6 L1467.1,643.6 L1469.3,641.8 L1471.5,642.6 L1473.7,642.6 L1475.9,641.8 L1478.1,644.6 L1480.3,643.6 L1482.5,641.8 L1484.7,644.6 L1486.9,641 L1486.9,643.5 L1488.9,636 L1490.9,643.5 L1492.4,641.8 L1494.6,643.6 L1496.8,641 L1498,643.5 L1500,558 L1502,643.5 L1503.5,644.6 L1505.7,643.6 L1507.9,645.4 L1510.1,643.6 L1512.3,642.6 L1514.5,643.6 L1516.7,641 L1518.9,641.8 L1521.1,643.6 L1521.3,643.5 L1523.3,636 L1525.3,643.5 L1526.8,645.4 L1529,643.6 L1531.2,643.6 L1533.4,645.4 L1535.6,645.4 L1537.8,641.8 L1539.1,643.5 L1541.1,632 L1543.1,643.5 L1544.6,643.6 L1546.8,645.4 L1549,644.6 L1551,644" fill="none" stroke="#7eb26d" stroke-width="2.8" stroke-linejoin="round" stroke-linecap="round"/>
<rect x="982.8" y="705.9" width="12" height="4.2" rx="1.5" fill="#7eb26d"/>
<text x="998.3" y="711" font-size="11" font-weight="400" text-anchor="start" fill="#d8d9da"  stroke="#d8d9da" stroke-width="0.3">Load-power.last</text>
<text x="1082.3" y="711" font-size="11" font-weight="400" text-anchor="start" fill="#d8d9da"  stroke="#d8d9da" stroke-width="0.3">Min: 2 W</text>
<text x="1130.2" y="711" font-size="11" font-weight="400" text-anchor="start" fill="#d8d9da"  stroke="#d8d9da" stroke-width="0.3">Max: 12 W</text>
<text x="1189.2" y="711" font-size="11" font-weight="400" text-anchor="start" fill="#d8d9da"  stroke="#d8d9da" stroke-width="0.3">Avg: 3 W</text>
<text x="1240.1" y="711" font-size="11" font-weight="400" text-anchor="start" fill="#d8d9da"  stroke="#d8d9da" stroke-width="0.3">Current: 3 W</text>
<text x="1739.9" y="514.6" font-size="13" font-weight="700" text-anchor="middle" fill="#d8d9da" letter-spacing="-0.3">Aktueller Verbrauch (Ampere)</text>
<path d="M1594,614 L1595,619 L1598.5,611 L1604.5,617 L1607.5,614 L1610.5,617.5 L1613.5,609 L1616.5,616 L1619.5,609.5 L1625.5,620 L1631.5,611 L1637,612 L1642.5,620 L1644.5,620 L1650,609.5 L1656,619 L1660,611.65 L1664,616.9 L1668,616.35 L1672,614.79 L1676,612.16 L1680,617.93 L1684,618.08 L1688,615.12 L1692,615.05 L1696,612.36 L1700,610.03 L1704,613.71 L1710,615 L1716.5,618 L1723,606.5 L1727,619 L1732,609 L1735.6,619 L1740,615 L1749,613 L1757.8,619 L1763,615.6 L1768.9,620 L1780,617.8 L1785,615.85 L1789,610.69 L1793,617.94 L1797,612.32 L1801,612.33 L1805,610.42 L1809,619.98 L1813,617.39 L1817.8,618.4 L1824.4,619 L1829.3,574.4 L1832.2,620 L1834.4,611.8 L1837.8,619 L1841.6,558.2 L1844.4,615 L1850,610 L1853.3,611 L1856.7,551.1 L1860,561 L1863.3,619 L1865.6,615.6 L1872.2,611.8 L1876.7,620 L1881.1,616.7 L1884,620 L1884,713.3 L1594,713.3 Z" fill="rgba(31,118,189,0.16)"/>
<path d="M1594,614 L1595,619 L1598.5,611 L1604.5,617 L1607.5,614 L1610.5,617.5 L1613.5,609 L1616.5,616 L1619.5,609.5 L1625.5,620 L1631.5,611 L1637,612 L1642.5,620 L1644.5,620 L1650,609.5 L1656,619 L1660,611.65 L1664,616.9 L1668,616.35 L1672,614.79 L1676,612.16 L1680,617.93 L1684,618.08 L1688,615.12 L1692,615.05 L1696,612.36 L1700,610.03 L1704,613.71 L1710,615 L1716.5,618 L1723,606.5 L1727,619 L1732,609 L1735.6,619 L1740,615 L1749,613 L1757.8,619 L1763,615.6 L1768.9,620 L1780,617.8 L1785,615.85 L1789,610.69 L1793,617.94 L1797,612.32 L1801,612.33 L1805,610.42 L1809,619.98 L1813,617.39 L1817.8,618.4 L1824.4,619 L1829.3,574.4 L1832.2,620 L1834.4,611.8 L1837.8,619 L1841.6,558.2 L1844.4,615 L1850,610 L1853.3,611 L1856.7,551.1 L1860,561 L1863.3,619 L1865.6,615.6 L1872.2,611.8 L1876.7,620 L1881.1,616.7 L1884,620" fill="none" stroke="rgb(31,120,193)" stroke-width="1.2" stroke-linejoin="round"/>
<path d="M1654.98,691.13 A89.4,89.4 0 1 1 1825.02,691.13 L1797.82,682.29 A60.8,60.8 0 1 0 1682.18,682.29 Z" fill="#262628"/>
<path d="M1654.98,691.13 A89.4,89.4 0 0 1 1651.39,675.37 L1679.74,671.57 A60.8,60.8 0 0 0 1682.18,682.29 Z" fill="#578e43"/>
<path d="M1649.17,693.01 A95.5,95.5 0 1 1 1830.83,693.01 L1825.88,691.4 A90.3,90.3 0 1 0 1654.12,691.4 Z" fill="#578e43"/>
<text x="0" y="0" font-size="14" text-anchor="middle" dominant-baseline="central" fill="#d8d9da" transform="translate(1641.09,695.64) rotate(252)">0</text>
<text x="0" y="0" font-size="14" text-anchor="middle" dominant-baseline="central" fill="#d8d9da" transform="translate(1838.91,695.64) rotate(468)">5</text>
<text x="0" y="0" font-size="36.5" font-weight="700" text-anchor="middle" fill="#d8d9da" transform="translate(1740,682.5) scale(1.0,1)">0.24 A</text>
<text x="171.9" y="754.6" font-size="13" font-weight="700" text-anchor="middle" fill="#d8d9da" letter-spacing="-0.3">Batterie-Temperatur (Celsius)</text>
<g stroke="rgba(255,255,255,0.13)" stroke-width="1"><line x1="72.1" y1="911.1" x2="298.8" y2="911.1" /><line x1="72.1" y1="864.8" x2="298.8" y2="864.8" /><line x1="72.1" y1="818.5" x2="298.8" y2="818.5" /><line x1="72.1" y1="772.2" x2="298.8" y2="772.2" /><line x1="136.3" y1="772.2" x2="136.3" y2="911.1" /><line x1="212.3" y1="772.2" x2="212.3" y2="911.1" /><line x1="288.3" y1="772.2" x2="288.3" y2="911.1" /></g>
<text x="66.6" y="913.7" font-size="11" font-weight="400" text-anchor="end" fill="#d8d9da"  stroke="#d8d9da" stroke-width="0.3">11.0 °C</text>
<text x="66.6" y="867.4" font-size="11" font-weight="400" text-anchor="end" fill="#d8d9da"  stroke="#d8d9da" stroke-width="0.3">12.0 °C</text>
<text x="66.6" y="821.1" font-size="11" font-weight="400" text-anchor="end" fill="#d8d9da"  stroke="#d8d9da" stroke-width="0.3">13.0 °C</text>
<text x="66.6" y="774.8" font-size="11" font-weight="400" text-anchor="end" fill="#d8d9da"  stroke="#d8d9da" stroke-width="0.3">14.0 °C</text>
<text x="136.3" y="927.9" font-size="11" font-weight="400" text-anchor="middle" fill="#d8d9da"  stroke="#d8d9da" stroke-width="0.3">08:00</text>
<text x="212.3" y="927.9" font-size="11" font-weight="400" text-anchor="middle" fill="#d8d9da"  stroke="#d8d9da" stroke-width="0.3">16:00</text>
<text x="288.3" y="927.9" font-size="11" font-weight="400" text-anchor="middle" fill="#d8d9da"  stroke="#d8d9da" stroke-width="0.3">00:00</text>
<path d="M72.1,885 L74.73,881.84 L77.37,880.5 L80,877 L82.6,873.93 L85.2,872.57 L87.8,869.05 L90.4,866.95 L93,865 L96.5,862.4 L100,858 L102.67,855.14 L105.33,853.59 L108,851 L111.5,848.93 L115,847 L118,846.67 L121,846.49 L124,845.7 L127,846 L130,845.93 L133,843.93 L136,844 L138.67,842.19 L141.33,840.47 L144,840 L146.75,837.33 L149.5,835.33 L152.25,833.97 L155,831 L157.5,828.28 L160,825.3 L162.5,823.07 L165,821 L167.5,820.13 L170,816.71 L172.5,815.97 L175,814 L177.67,811.45 L180.33,809.62 L183,807 L186,805.71 L189,805.34 L192,804 L195,803 L197.5,803.35 L200,803.89 L202.5,803.4 L205,802.69 L207.5,802.63 L210,803.5 L212.67,803.47 L215.33,801.81 L218,801 L220.5,799.95 L223,800.8 L225.5,799.64 L228,799 L230.83,798.58 L233.67,798.02 L236.5,796.11 L239.33,795.41 L242.17,795.51 L245,794 L247.83,792.84 L250.67,793.48 L253.5,791.78 L256.33,792.34 L259.17,791.86 L262,791 L264.6,791.51 L267.2,791.02 L269.8,790.11 L272.4,789.26 L275,789.5 L277.5,788.62 L280,789.05 L282.5,788.77 L285,788.5 L287.7,787.63 L290.4,789.03 L293.1,788.21 L295.8,788.46 L298.5,788 L298.5,911.6 L72.1,911.6 Z" fill="rgba(126,178,109,0.8)" stroke="none"/>
<path d="M72.1,885 L74.73,881.84 L77.37,880.5 L80,877 L82.6,873.93 L85.2,872.57 L87.8,869.05 L90.4,866.95 L93,865 L96.5,862.4 L100,858 L102.67,855.14 L105.33,853.59 L108,851 L111.5,848.93 L115,847 L118,846.67 L121,846.49 L124,845.7 L127,846 L130,845.93 L133,843.93 L136,844 L138.67,842.19 L141.33,840.47 L144,840 L146.75,837.33 L149.5,835.33 L152.25,833.97 L155,831 L157.5,828.28 L160,825.3 L162.5,823.07 L165,821 L167.5,820.13 L170,816.71 L172.5,815.97 L175,814 L177.67,811.45 L180.33,809.62 L183,807 L186,805.71 L189,805.34 L192,804 L195,803 L197.5,803.35 L200,803.89 L202.5,803.4 L205,802.69 L207.5,802.63 L210,803.5 L212.67,803.47 L215.33,801.81 L218,801 L220.5,799.95 L223,800.8 L225.5,799.64 L228,799 L230.83,798.58 L233.67,798.02 L236.5,796.11 L239.33,795.41 L242.17,795.51 L245,794 L247.83,792.84 L250.67,793.48 L253.5,791.78 L256.33,792.34 L259.17,791.86 L262,791 L264.6,791.51 L267.2,791.02 L269.8,790.11 L272.4,789.26 L275,789.5 L277.5,788.62 L280,789.05 L282.5,788.77 L285,788.5 L287.7,787.63 L290.4,789.03 L293.1,788.21 L295.8,788.46 L298.5,788" fill="none" stroke="#7eb26d" stroke-width="2.8" stroke-linejoin="round" stroke-linecap="round"/>
<rect x="42.1" y="945.9" width="12" height="4.2" rx="1.5" fill="#7eb26d"/>
<text x="57.6" y="951" font-size="11" font-weight="400" text-anchor="start" fill="#d8d9da"  stroke="#d8d9da" stroke-width="0.3">Battery-temperature.last</text>
<text x="181.9" y="951" font-size="11" font-weight="400" text-anchor="start" fill="#d8d9da"  stroke="#d8d9da" stroke-width="0.3">Current: 13.64 °C</text>
<text x="485.5" y="754.6" font-size="13" font-weight="700" text-anchor="middle" fill="#d8d9da" letter-spacing="-0.3">Batterie-Ladung (Ampere)</text>
<path d="M401.68,931.13 A89.4,89.4 0 1 1 571.72,931.13 L544.52,922.29 A60.8,60.8 0 1 0 428.88,922.29 Z" fill="#262628"/>
<path d="M395.87,933.01 A95.5,95.5 0 1 1 577.53,933.01 L572.58,931.4 A90.3,90.3 0 1 0 400.82,931.4 Z" fill="#578e43"/>
<text x="0" y="0" font-size="14" text-anchor="middle" dominant-baseline="central" fill="#d8d9da" transform="translate(387.79,935.64) rotate(252)">0</text>
<text x="0" y="0" font-size="14" text-anchor="middle" dominant-baseline="central" fill="#d8d9da" transform="translate(585.61,935.64) rotate(468)">10</text>
<text x="0" y="0" font-size="36.5" font-weight="700" text-anchor="middle" fill="#d8d9da" transform="translate(486.7,922.5) scale(1.0,1)">0 A</text>
<text x="799.1" y="754.6" font-size="13" font-weight="700" text-anchor="middle" fill="#d8d9da" letter-spacing="-0.3">Solar Produktion gesamt (Tag)</text>
<path d="M653.3,953.3 L751,953.3 L754.5,899.5 L770,899.5 L772.5,845.6 L791,845.6 L794.5,790.7 L943.3,790.7 L943.3,953.3 L653.3,953.3 Z" fill="rgba(31,118,189,0.16)"/>
<path d="M653.3,953.3 L751,953.3 L754.5,899.5 L770,899.5 L772.5,845.6 L791,845.6 L794.5,790.7 L943.3,790.7" fill="none" stroke="rgb(31,120,193)" stroke-width="1.2" stroke-linejoin="round"/>
<text x="0" y="0" font-size="47" font-weight="700" text-anchor="middle" fill="#d8d9da" transform="translate(799.1,876.2) scale(0.91,1)">0.03 kW</text>
<text x="1112.7" y="754.6" font-size="13" font-weight="700" text-anchor="middle" fill="#d8d9da" letter-spacing="-0.3">Verbrauch gesamt (Tag)</text>
<path d="M967.2,953.3 L977.2,953.3 L980.6,933 L1016.6,933 L1019.5,912.8 L1052.8,912.8 L1056,892.8 L1089.4,892.8 L1092.8,872.6 L1126,872.6 L1129.4,852.2 L1165,852.2 L1168.3,832.2 L1201.7,832.2 L1205,811.7 L1236,811.7 L1239.4,790.7 L1257.2,790.7 L1257.2,953.3 L967.2,953.3 Z" fill="rgba(31,118,189,0.16)"/>
<path d="M967.2,953.3 L977.2,953.3 L980.6,933 L1016.6,933 L1019.5,912.8 L1052.8,912.8 L1056,892.8 L1089.4,892.8 L1092.8,872.6 L1126,872.6 L1129.4,852.2 L1165,852.2 L1168.3,832.2 L1201.7,832.2 L1205,811.7 L1236,811.7 L1239.4,790.7 L1257.2,790.7" fill="none" stroke="rgb(31,120,193)" stroke-width="1.2" stroke-linejoin="round"/>
<text x="0" y="0" font-size="47" font-weight="700" text-anchor="middle" fill="#d8d9da" transform="translate(1112.7,876.2) scale(0.91,1)">0.08 kW</text>
<text x="1426.3" y="754.6" font-size="13" font-weight="700" text-anchor="middle" fill="#d8d9da" letter-spacing="-0.3">Batterie-Spannung (Volt)</text>
<path d="M1342.08,931.13 A89.4,89.4 0 1 1 1512.12,931.13 L1484.92,922.29 A60.8,60.8 0 1 0 1369.28,922.29 Z" fill="#262628"/>
<path d="M1342.08,931.13 A89.4,89.4 0 0 1 1346.5,864.83 L1372.28,877.2 A60.8,60.8 0 0 0 1369.28,922.29 Z" fill="#578e43"/>
<path d="M1336.27,933.01 A95.5,95.5 0 0 1 1335.56,876.28 L1340.55,877.76 A90.3,90.3 0 0 0 1341.22,931.4 Z" fill="#bf1b00"/>
<path d="M1335.56,876.28 A95.5,95.5 0 0 1 1522.41,897.5 L1517.22,897.83 A90.3,90.3 0 0 0 1340.55,877.76 Z" fill="#578e43"/>
<path d="M1522.41,897.5 A95.5,95.5 0 0 1 1517.93,933.01 L1512.98,931.4 A90.3,90.3 0 0 0 1517.22,897.83 Z" fill="#bf1b00"/>
<text x="0" y="0" font-size="14" text-anchor="middle" dominant-baseline="central" fill="#d8d9da" transform="translate(1328.19,935.64) rotate(252)">11</text>
<text x="0" y="0" font-size="14" text-anchor="middle" dominant-baseline="central" fill="#d8d9da" transform="translate(1327.41,873.86) rotate(286.56)">11.8</text>
<text x="0" y="0" font-size="14" text-anchor="middle" dominant-baseline="central" fill="#d8d9da" transform="translate(1530.89,896.97) rotate(446.4)">15.5</text>
<text x="0" y="0" font-size="14" text-anchor="middle" dominant-baseline="central" fill="#d8d9da" transform="translate(1526.01,935.64) rotate(468)">16</text>
<text x="0" y="0" font-size="36.5" font-weight="700" text-anchor="middle" fill="#d8d9da" transform="translate(1427.1,922.5) scale(1.0,1)">12.01 V</text>
<text x="1739.9" y="754.6" font-size="13" font-weight="700" text-anchor="middle" fill="#d8d9da" letter-spacing="-0.3">EPSOLAR-Temperatur (Celsius)</text>
<g stroke="rgba(255,255,255,0.13)" stroke-width="1"><line x1="1640" y1="911.1" x2="1866.7" y2="911.1" /><line x1="1640" y1="883.32" x2="1866.7" y2="883.32" /><line x1="1640" y1="855.54" x2="1866.7" y2="855.54" /><line x1="1640" y1="827.76" x2="1866.7" y2="827.76" /><line x1="1640" y1="799.98" x2="1866.7" y2="799.98" /><line x1="1640" y1="772.2" x2="1866.7" y2="772.2" /><line x1="1704.4" y1="772.2" x2="1704.4" y2="911.1" /><line x1="1780.4" y1="772.2" x2="1780.4" y2="911.1" /><line x1="1856.4" y1="772.2" x2="1856.4" y2="911.1" /></g>
<text x="1634.5" y="913.7" font-size="11" font-weight="400" text-anchor="end" fill="#d8d9da"  stroke="#d8d9da" stroke-width="0.3">12.0 °C</text>
<text x="1634.5" y="885.92" font-size="11" font-weight="400" text-anchor="end" fill="#d8d9da"  stroke="#d8d9da" stroke-width="0.3">13.0 °C</text>
<text x="1634.5" y="858.14" font-size="11" font-weight="400" text-anchor="end" fill="#d8d9da"  stroke="#d8d9da" stroke-width="0.3">14.0 °C</text>
<text x="1634.5" y="830.36" font-size="11" font-weight="400" text-anchor="end" fill="#d8d9da"  stroke="#d8d9da" stroke-width="0.3">15.0 °C</text>
<text x="1634.5" y="802.58" font-size="11" font-weight="400" text-anchor="end" fill="#d8d9da"  stroke="#d8d9da" stroke-width="0.3">16.0 °C</text>
<text x="1634.5" y="774.8" font-size="11" font-weight="400" text-anchor="end" fill="#d8d9da"  stroke="#d8d9da" stroke-width="0.3">17.0 °C</text>
<text x="1704.4" y="927.9" font-size="11" font-weight="400" text-anchor="middle" fill="#d8d9da"  stroke="#d8d9da" stroke-width="0.3">08:00</text>
<text x="1780.4" y="927.9" font-size="11" font-weight="400" text-anchor="middle" fill="#d8d9da"  stroke="#d8d9da" stroke-width="0.3">16:00</text>
<text x="1856.4" y="927.9" font-size="11" font-weight="400" text-anchor="middle" fill="#d8d9da"  stroke="#d8d9da" stroke-width="0.3">00:00</text>
<path d="M1640,906 L1642.5,902.36 L1645,899.14 L1647.5,895.57 L1650,893 L1652.5,889.78 L1655,886.67 L1657.5,883.89 L1660,881 L1663,878.08 L1666,875.97 L1669,873.3 L1672,870 L1674.6,867.55 L1677.2,865.85 L1679.8,863.53 L1682.4,862.23 L1685,860 L1687.5,859.41 L1690,857.08 L1692.5,856.62 L1695,855 L1697.5,854.47 L1700,854.5 L1704,847 L1707,841.32 L1710,837 L1714,828 L1717,823.37 L1720,818 L1723.5,811.78 L1727,806 L1729.67,803.54 L1732.33,801.91 L1735,800 L1737.67,798.96 L1740.33,798.54 L1743,798 L1745.5,794.92 L1748,792 L1752,791 L1754.67,791.89 L1757.33,793.12 L1760,794 L1762.5,795.08 L1765,796.18 L1767.5,797.54 L1770,799.5 L1773,800.7 L1776,803 L1778.5,803.28 L1781,803.5 L1783.5,807.05 L1786,811 L1789,814.93 L1792,818 L1794.67,819.17 L1797.33,820.62 L1800,821.5 L1802.5,822.42 L1805,821.39 L1807.5,821.57 L1810,822.5 L1812.5,821.81 L1815,821.97 L1817.5,822.04 L1820,822.09 L1822.5,821.35 L1825,822.03 L1827.5,820.49 L1830,821 L1832.59,821.43 L1835.19,820.52 L1837.78,821.42 L1840.37,820.2 L1842.96,821.47 L1845.56,821.15 L1848.15,821.44 L1850.74,820.83 L1853.34,820.23 L1855.93,821.3 L1858.52,820.53 L1861.11,819.99 L1863.71,820.68 L1866.3,820.5 L1866.3,911.6 L1640,911.6 Z" fill="rgba(126,178,109,0.8)" stroke="none"/>
<path d="M1640,906 L1642.5,902.36 L1645,899.14 L1647.5,895.57 L1650,893 L1652.5,889.78 L1655,886.67 L1657.5,883.89 L1660,881 L1663,878.08 L1666,875.97 L1669,873.3 L1672,870 L1674.6,867.55 L1677.2,865.85 L1679.8,863.53 L1682.4,862.23 L1685,860 L1687.5,859.41 L1690,857.08 L1692.5,856.62 L1695,855 L1697.5,854.47 L1700,854.5 L1704,847 L1707,841.32 L1710,837 L1714,828 L1717,823.37 L1720,818 L1723.5,811.78 L1727,806 L1729.67,803.54 L1732.33,801.91 L1735,800 L1737.67,798.96 L1740.33,798.54 L1743,798 L1745.5,794.92 L1748,792 L1752,791 L1754.67,791.89 L1757.33,793.12 L1760,794 L1762.5,795.08 L1765,796.18 L1767.5,797.54 L1770,799.5 L1773,800.7 L1776,803 L1778.5,803.28 L1781,803.5 L1783.5,807.05 L1786,811 L1789,814.93 L1792,818 L1794.67,819.17 L1797.33,820.62 L1800,821.5 L1802.5,822.42 L1805,821.39 L1807.5,821.57 L1810,822.5 L1812.5,821.81 L1815,821.97 L1817.5,822.04 L1820,822.09 L1822.5,821.35 L1825,822.03 L1827.5,820.49 L1830,821 L1832.59,821.43 L1835.19,820.52 L1837.78,821.42 L1840.37,820.2 L1842.96,821.47 L1845.56,821.15 L1848.15,821.44 L1850.74,820.83 L1853.34,820.23 L1855.93,821.3 L1858.52,820.53 L1861.11,819.99 L1863.71,820.68 L1866.3,820.5" fill="none" stroke="#7eb26d" stroke-width="2.8" stroke-linejoin="round" stroke-linecap="round"/>
<rect x="1610" y="945.9" width="12" height="4.2" rx="1.5" fill="#7eb26d"/>
<text x="1625.5" y="951" font-size="11" font-weight="400" text-anchor="start" fill="#d8d9da"  stroke="#d8d9da" stroke-width="0.3">Charger-temperature.last</text>
<text x="1754.7" y="951" font-size="11" font-weight="400" text-anchor="start" fill="#d8d9da"  stroke="#d8d9da" stroke-width="0.3">Current: 15 °C</text>
<text x="171.9" y="994.6" font-size="13" font-weight="700" text-anchor="middle" fill="#d8d9da" letter-spacing="-0.3">Solar Produktion gesamt (Seit 11/2016)</text>
<text x="0" y="0" font-size="47" font-weight="700" text-anchor="middle" fill="#d8d9da" transform="translate(171.9,1056) scale(0.91,1)">617.43 kW</text>
<text x="485.5" y="994.6" font-size="13" font-weight="700" text-anchor="middle" fill="#d8d9da" letter-spacing="-0.3">Solar Produktion in diesem Jahr</text>
<text x="0" y="0" font-size="47" font-weight="700" text-anchor="middle" fill="#d8d9da" transform="translate(485.5,1056) scale(0.91,1)">73.68 kW</text>
<text x="799.1" y="994.6" font-size="13" font-weight="700" text-anchor="middle" fill="#d8d9da" letter-spacing="-0.3">Solar Produktion in diesem Monat</text>
<text x="0" y="0" font-size="47" font-weight="700" text-anchor="middle" fill="#d8d9da" transform="translate(799.1,1056) scale(0.91,1)">7.27 kW</text>
<text x="1112.7" y="994.6" font-size="13" font-weight="700" text-anchor="middle" fill="#d8d9da" letter-spacing="-0.3">Solar Verbrauch gesamt (Seit 10/2016)</text>
<text x="0" y="0" font-size="47" font-weight="700" text-anchor="middle" fill="#d8d9da" transform="translate(1112.7,1056) scale(0.91,1)">412.98 kW</text>
<text x="1426.3" y="994.6" font-size="13" font-weight="700" text-anchor="middle" fill="#d8d9da" letter-spacing="-0.3">Solar Verbrauch in diesem Jahr</text>
<text x="0" y="0" font-size="47" font-weight="700" text-anchor="middle" fill="#d8d9da" transform="translate(1426.3,1056) scale(0.91,1)">44.83 kW</text>
<text x="1739.9" y="994.6" font-size="13" font-weight="700" text-anchor="middle" fill="#d8d9da" letter-spacing="-0.3">Solar Verbrauch in diesem Monat</text>
<text x="0" y="0" font-size="47" font-weight="700" text-anchor="middle" fill="#d8d9da" transform="translate(1739.9,1056) scale(0.91,1)">5.52 kW</text>
</svg>
</body></html>
